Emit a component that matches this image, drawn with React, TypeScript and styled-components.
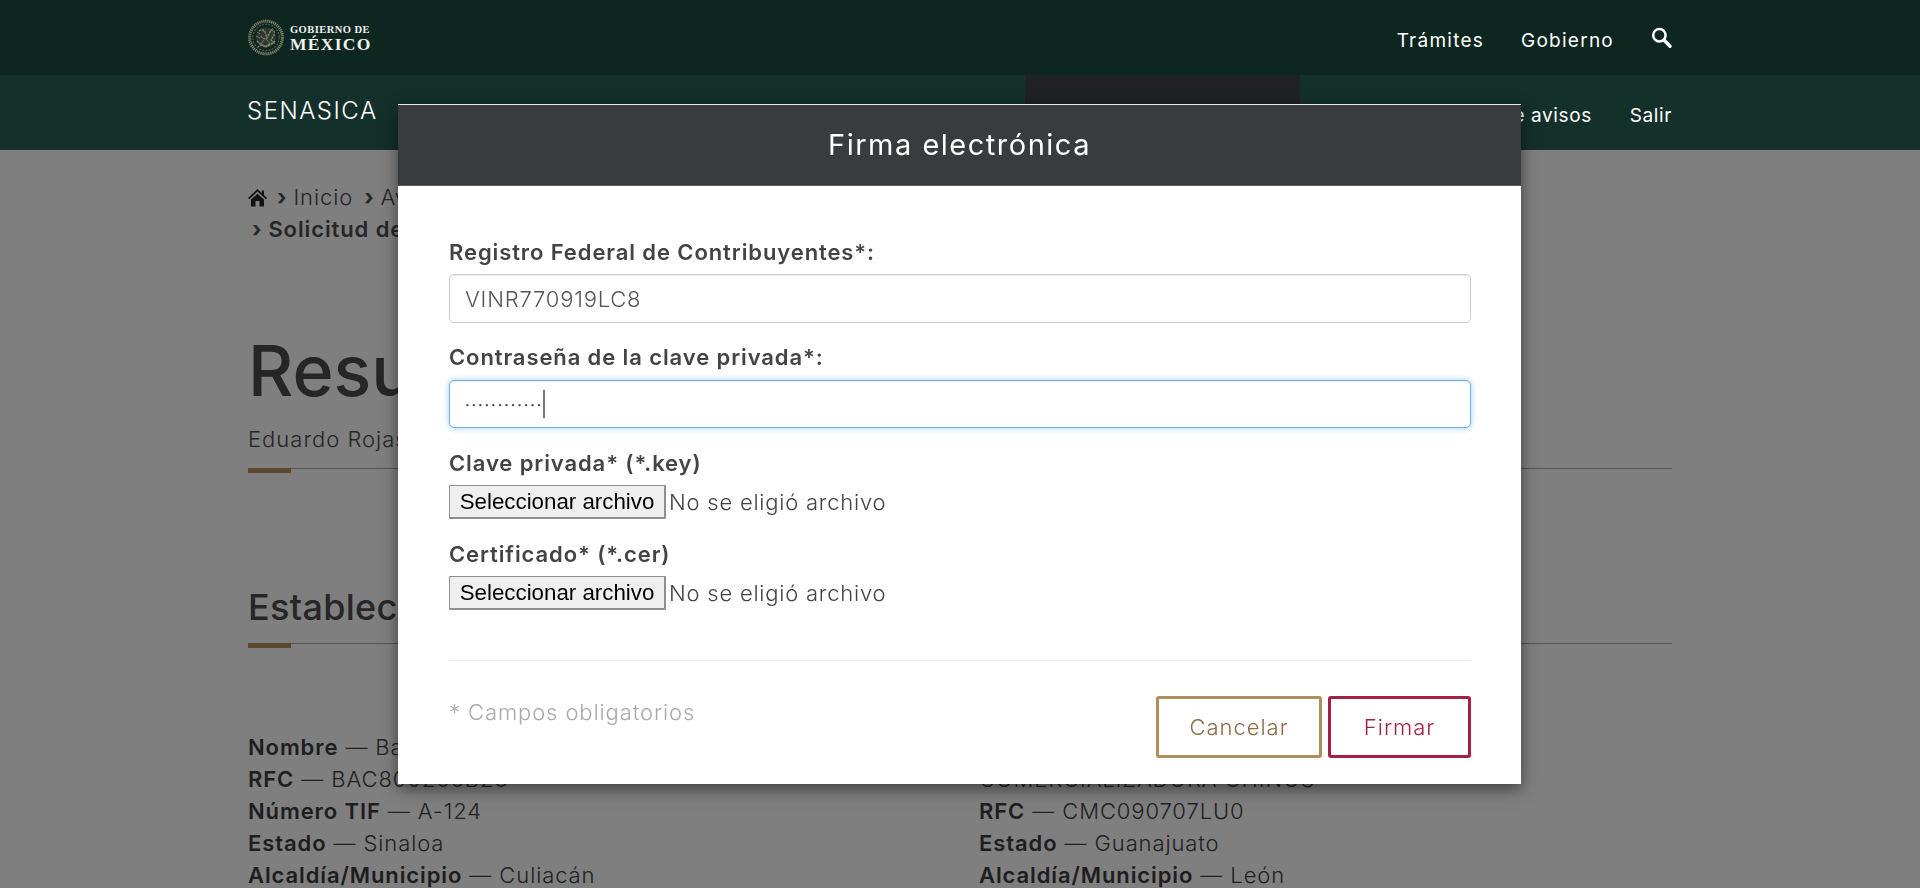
import styled, { createGlobalStyle } from 'styled-components';

const GlobalStyle = createGlobalStyle`
  html, body {
    margin: 0;
    height: 888px;
    overflow: hidden;
    background: #fff;
    font-family: Inter, "Noto Sans", "Liberation Sans", sans-serif;
    color: #545454;
  }
  * { box-sizing: border-box; }
`;

const Backdrop = styled.div`
  position: fixed;
  inset: 0;
  z-index: 10;
  background: rgba(0, 0, 0, 0.5);
`;

const TopBar = styled.header`
  position: relative;
  z-index: 11;
  height: 75px;
  background: #0e2620;
  color: #fff;
  padding: 0 248px 0 248px;
  display: flex;
  align-items: center;
  justify-content: space-between;
`;

const Logo = styled.div`
  display: flex;
  align-items: center;
  gap: 6px;
`;

const LogoText = styled.div`
  font-family: "Liberation Serif", "DejaVu Serif", serif;
  font-weight: 700;
  color: #f1f1ee;
  display: flex;
  flex-direction: column;
`;

const LogoSmall = styled.span`
  font-size: 10.5px;
  line-height: 13px;
  letter-spacing: 0.45px;
`;

const LogoBig = styled.span`
  font-size: 17.5px;
  line-height: 17px;
  letter-spacing: 1.3px;
`;

const TopLinks = styled.nav`
  display: flex;
  align-items: center;
  gap: 37px;
  padding-top: 5px;
  font-size: 19px;
  letter-spacing: 1.25px;
`;

const SearchButton = styled.span`
  display: flex;
  margin-top: -6px;
`;

const SubBar = styled.div`
  position: relative;
  z-index: 11;
  height: 75px;
  background: #14302b;
  color: #fff;
  padding: 0 248px 0 247px;
  display: flex;
  align-items: stretch;
  justify-content: space-between;
`;

const Brand = styled.div`
  font-size: 24px;
  font-weight: 300;
  letter-spacing: 1.5px;
  line-height: 72px;
`;

const SubLinks = styled.nav`
  display: flex;
  align-items: center;
  letter-spacing: 0.6px;
`;

const ActiveItem = styled.div`
  align-self: stretch;
  width: 275px;
  margin-right: -1px;
  background: #1f2124;
`;

const SubLink = styled.span`
  font-size: 19px;
  padding-top: 6px;
  margin-left: ${(p: { $gap: number }) => p.$gap}px;
`;

const Main = styled.main`
  padding: 31px 248px 0;
  color: #4c4c4c;
`;

const Crumbs = styled.div`
  font-size: 22px;
  font-weight: 300;
  line-height: 32px;
  letter-spacing: 0.9px;
  width: 900px;
`;

const CrumbRow = styled.div`
  display: flex;
  align-items: center;
  gap: 6px;
`;

const CrumbSep = styled.span`
  font-weight: 700;
  margin-left: ${(p: { $wide?: boolean }) => (p.$wide ? 5 : 4)}px;
`;

const CrumbStrong = styled.strong`
  font-weight: 600;
`;

const PageTitle = styled.h1`
  margin: 84px 0 0;
  font-size: 70px;
  line-height: 84px;
  font-weight: 550;
  color: #4c4c4c;
`;

const Author = styled.p`
  margin: 11px 0 14px;
  font-size: 22px;
  line-height: 30px;
  font-weight: 300;
  letter-spacing: 1px;
`;

const Rule = styled.div`
  position: relative;
  height: 1px;
  background: #aaa;
  &::after {
    content: '';
    position: absolute;
    left: 0;
    top: 0;
    width: 43px;
    height: 5px;
    background: #b38e5d;
  }
`;

const SectionTitle = styled.h2`
  margin: 0;
  font-size: 36px;
  line-height: 42px;
  font-weight: 550;
  letter-spacing: 0.3px;
`;

const SectionBlock = styled.section`
  margin-top: 117px;
`;

const RuleSpaced = styled(Rule)`
  margin: 15px 0 87px;
`;

const Columns = styled.div`
  display: grid;
  grid-template-columns: 731px 1fr;
`;

const Line = styled.div`
  font-size: 22px;
  line-height: 32px;
  font-weight: 300;
  letter-spacing: 0.9px;
  color: #444;
  white-space: nowrap;
  b {
    font-weight: 600;
    color: #3c3c3c;
  }
`;

const Modal = styled.div`
  position: fixed;
  z-index: 20;
  left: 398px;
  top: 104px;
  width: 1123px;
  height: 680px;
  background: #fff;
  box-shadow: 0 5px 15px rgba(0, 0, 0, 0.5);
  display: flex;
  flex-direction: column;
`;

const ModalHead = styled.div`
  height: 82px;
  background: #393c3f;
  border-top: 1px solid #e8e8e8;
  border-bottom: 1px solid #5a5a5a;
  color: #fff;
  font-size: 29px;
  font-weight: 400;
  letter-spacing: 1.5px;
  text-align: center;
  line-height: 80px;
`;

const ModalBody = styled.div`
  padding: 51px 50px 0 51px;
  display: flex;
  flex-direction: column;
`;

const Label = styled.label`
  font-size: 22px;
  line-height: 30px;
  font-weight: 600;
  letter-spacing: 0.9px;
  color: #444;
  margin-bottom: 7px;
`;

const Field = styled.div<{ $focus?: boolean }>`
  height: ${(p) => (p.$focus ? 48 : 49)}px;
  margin-top: ${(p) => (p.$focus ? 1 : 0)}px;
  border-radius: 5px;
  border: 1px solid ${(p) => (p.$focus ? '#66afe9' : '#ccc')};
  box-shadow: ${(p) => (p.$focus ? '0 0 6px rgba(102,175,233,.6), inset 0 1px 1px rgba(0,0,0,.075)' : 'inset 0 1px 1px rgba(0,0,0,.075)')};
  padding: 0 15px;
  font-size: 22px;
  font-weight: 300;
  letter-spacing: 0.8px;
  color: #555;
  display: flex;
  align-items: center;
  margin-bottom: ${(p) => (p.$focus ? 20 : 19)}px;
`;

const Dots = styled.span`
  font-size: 14px;
  font-weight: 700;
  letter-spacing: 1.85px;
`;

const Caret = styled.span`
  width: 2px;
  height: 28px;
  background: #777;
`;

const FileRow = styled.div`
  display: flex;
  align-items: center;
  gap: 3px;
  margin-bottom: 20px;
`;

const FileButton = styled.button`
  width: 217px;
  height: 34px;
  padding: 0;
  font-family: "Liberation Sans", Arial, sans-serif;
  font-size: 22.3px;
  color: #000;
  background: #efefef;
  border: 1px solid #8f8f8f;
  border-width: 1px 2px 2px 1px;
  border-radius: 1px;
`;

const FileName = styled.span`
  font-size: 22px;
  font-weight: 300;
  letter-spacing: 0.78px;
  color: #444;
`;

const Divider = styled.hr`
  margin: 30px 0 0;
  border: 0;
  border-top: 1px solid #e8e8e8;
`;

const Foot = styled.div`
  display: flex;
  justify-content: space-between;
  padding-top: 35px;
`;

const Required = styled.span`
  font-size: 22px;
  font-weight: 300;
  color: #aaa;
  letter-spacing: 0.9px;
  line-height: 32px;
`;

const FootActions = styled.div`
  display: flex;
  gap: 6px;
`;

const ActionButton = styled.button<{ $border: string; $ink: string; $w: number }>`
  width: ${(p) => p.$w}px;
  height: 62px;
  border: 3px solid ${(p) => p.$border};
  border-radius: 3px;
  background: #fff;
  color: ${(p) => p.$ink};
  font-family: inherit;
  font-size: 22px;
  font-weight: 300;
  letter-spacing: 1px;
`;

function Emblem() {
  // escudo simplificado: anillo punteado y el aguila al centro
  return (
    <svg width="36" height="37" viewBox="0 0 36 37" fill="none" stroke="#85866c">
      <circle cx="18" cy="18.5" r="16.4" strokeWidth="3" strokeDasharray="1.2 0.8" />
      <circle cx="18" cy="18.5" r="13.2" strokeWidth="1.2" strokeDasharray="2 1.2" opacity="0.55" />
      <circle cx="18" cy="18.5" r="10" fill="#2c3830" stroke="none" />
      <path d="M11 12c2-2 5-1 6 1l2 6 4-8c3 0 4 2 3 5l-3 5 3 3-5 1-3 3-5-2-3 2M9 22c3 3 6 5 9 5s6-2 9-5M13 17c1 2 3 3 6 3" strokeWidth="1.3" strokeDasharray="2.4 0.7" />
      <path d="M8 17l4 2M25 9l-3 4M13 25l3-4M22 25l-3-4M15 10l1 3M9 13l3 2" strokeWidth="1" opacity="0.8" />
    </svg>
  );
}

function SearchIcon() {
  return (
    <svg width="21" height="21" viewBox="0 0 21 21" fill="none" stroke="#fff">
      <circle cx="8.4" cy="8.2" r="6.2" strokeWidth="2.5" />
      <path d="M13 13l6 6.2" strokeWidth="3.4" strokeLinecap="round" />
    </svg>
  );
}

function HomeIcon() {
  return (
    <svg width="19" height="19" viewBox="0 0 19 19" fill="#22262a">
      <path d="M9.5 1 0 10l1.2 1.2 8.3-7.600 8.300 7.600L19 10l-3-2.900V2.500h-2.200v2.500z" />
      <path d="M3 11.600 9.500 5.700l6.500 5.900V18.500h-4.500V13h-4v5.500H3z" />
    </svg>
  );
}

export default function App() {
  return (
    <>
      <GlobalStyle />
      <TopBar>
        <Logo>
          <Emblem />
          <LogoText>
            <LogoSmall>GOBIERNO DE</LogoSmall>
            <LogoBig>MÉXICO</LogoBig>
          </LogoText>
        </Logo>
        <TopLinks>
          <span>Trámites</span>
          <span>Gobierno</span>
          <SearchButton>
            <SearchIcon />
          </SearchButton>
        </TopLinks>
      </TopBar>
      <SubBar>
        <Brand>SENASICA</Brand>
        <SubLinks>
          <ActiveItem />
          <SubLink $gap={132}>Centro de avisos</SubLink>
          <SubLink $gap={38}>Salir</SubLink>
        </SubLinks>
      </SubBar>
      <Main>
        <Crumbs>
          <CrumbRow>
            <HomeIcon />
            <CrumbSep>›</CrumbSep>
            <span>Inicio</span>
            <CrumbSep $wide>›</CrumbSep>
            <span>Avisos</span>
          </CrumbRow>
          <CrumbRow>
            <CrumbSep>›</CrumbSep>
            <CrumbStrong>Solicitud de</CrumbStrong>
          </CrumbRow>
        </Crumbs>
        <PageTitle>Resumen</PageTitle>
        <Author>Eduardo Rojas</Author>
        <Rule />
        <SectionBlock>
          <SectionTitle>Establecimientos</SectionTitle>
          <RuleSpaced />
          <Columns>
            <div>
              <Line><b>Nombre</b> — Bachoco</Line>
              <Line><b>RFC</b> — BAC800206B23</Line>
              <Line><b>Número TIF</b> — A-124</Line>
              <Line><b>Estado</b> — Sinaloa</Line>
              <Line><b>Alcaldía/Municipio</b> — Culiacán</Line>
            </div>
            <div>
              <Line>&nbsp;</Line>
              <Line>COMERCIALIZADORA CHINOS</Line>
              <Line><b>RFC</b> — CMC090707LU0</Line>
              <Line><b>Estado</b> — Guanajuato</Line>
              <Line><b>Alcaldía/Municipio</b> — León</Line>
            </div>
          </Columns>
        </SectionBlock>
      </Main>
      <Backdrop />
      <Modal>
        <ModalHead>Firma electrónica</ModalHead>
        <ModalBody>
          <Label>Registro Federal de Contribuyentes*:</Label>
          <Field>VINR770919LC8</Field>
          <Label>Contraseña de la clave privada*:</Label>
          <Field $focus>
            <Dots>············</Dots>
            <Caret />
          </Field>
          <Label>Clave privada* (*.key)</Label>
          <FileRow>
            <FileButton>Seleccionar archivo</FileButton>
            <FileName>No se eligió archivo</FileName>
          </FileRow>
          <Label>Certificado* (*.cer)</Label>
          <FileRow>
            <FileButton>Seleccionar archivo</FileButton>
            <FileName>No se eligió archivo</FileName>
          </FileRow>
          <Divider />
          <Foot>
            <Required>* Campos obligatorios</Required>
            <FootActions>
              <ActionButton $border="#b38e5d" $ink="#8a6d45" $w={166}>Cancelar</ActionButton>
              <ActionButton $border="#a42145" $ink="#a42145" $w={143}>Firmar</ActionButton>
            </FootActions>
          </Foot>
        </ModalBody>
      </Modal>
    </>
  );
}
